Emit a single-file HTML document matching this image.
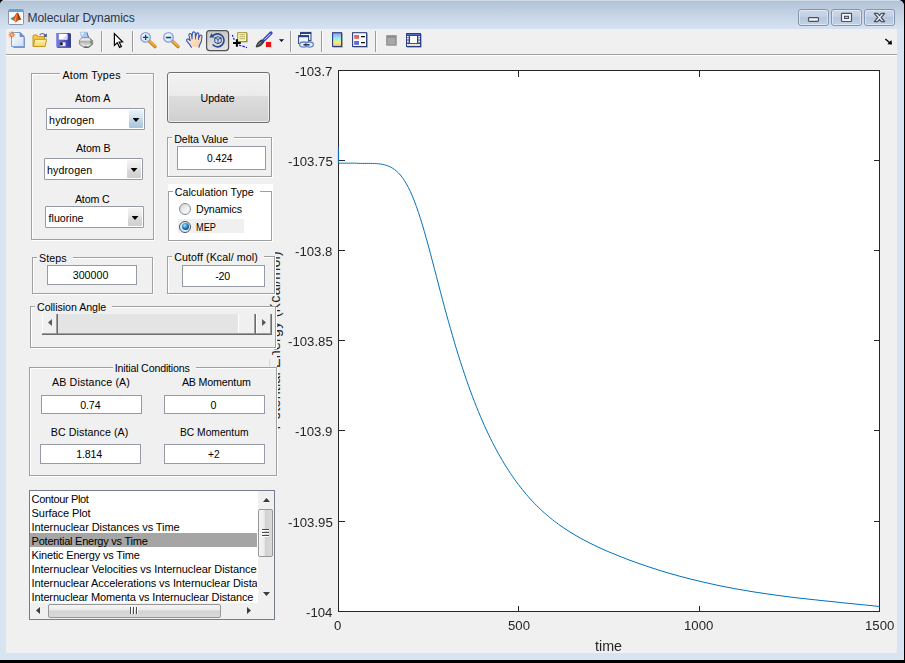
<!DOCTYPE html>
<html lang="en">
<head>
<meta charset="utf-8">
<title>Molecular Dynamics</title>
<style>
html,body{margin:0;padding:0;}
body{width:905px;height:663px;overflow:hidden;background:#000;font-family:"Liberation Sans",sans-serif;font-size:11px;color:#000;position:relative;}
#win{position:absolute;left:0;top:0;width:904px;height:660px;background:#d7e4f2;border-radius:5px 6px 0 0;overflow:hidden;}
#cap{position:absolute;left:0;top:0;width:904px;height:29px;background:linear-gradient(#dfe6ee 0px,#b3c4d8 1.5px,#bccbde 8px,#cad8e9 18px,#d5e2f1 29px);}
#cap .ttl{position:absolute;left:25.5px;top:10.4px;font-size:12px;line-height:17px;color:#2b3548;letter-spacing:-0.043px;white-space:pre;}
.cb{position:absolute;top:9px;height:17px;box-sizing:border-box;border:1px solid #8494ad;border-radius:3px;background:linear-gradient(#cbd8e9,#c1d0e4 45%,#b5c6dd 50%,#c3d2e6);box-shadow:inset 0 0 0 1px rgba(255,255,255,.45);}
#client{position:absolute;left:6px;top:29px;width:891px;height:624px;background:#f0f0f0;}
#tbline{position:absolute;left:6px;top:54px;width:891px;height:1px;background:#a0a0a0;box-shadow:0 1px 0 #fff;}
.sep{position:absolute;top:31px;width:1px;height:21px;background:#a0a0a0;}
.ico{position:absolute;overflow:visible;}
.t{position:absolute;white-space:pre;line-height:normal;font-size:11px;}
.ttl2{}
span.ttl{box-sizing:border-box;padding-left:2px;}
.pn{position:absolute;box-sizing:border-box;border:1px solid #a0a0a0;box-shadow:1px 1px 0 #fff,inset 1px 1px 0 #fff;background:#f0f0f0;}
.ed{position:absolute;box-sizing:border-box;border:1px solid #959aa4;background:#fff;}
.pop{position:absolute;box-sizing:border-box;border:1px solid #959aa4;border-radius:1px;background:#fff;height:22px;width:99px;}
.pop i{position:absolute;right:1px;top:1px;width:14px;height:18px;background:linear-gradient(#f3f3f3,#e8e8e8 42%,#dadada 58%,#cecece);border-radius:1px;}
.pop i.hot{background:linear-gradient(#e8f0f7,#d4e3ef 42%,#c0d5e6 58%,#a9c4da);}
.pop i:after{content:"";position:absolute;left:3.5px;top:8px;width:7px;height:4px;background:#000;clip-path:polygon(0 0,100% 0,50% 100%);}
#upd{position:absolute;left:167px;top:72px;width:103px;height:51px;box-sizing:border-box;border:1px solid #707070;border-radius:3px;background:linear-gradient(#f2f2f2 0,#ebebeb 46%,#dddddd 47%,#cfcfcf 100%);box-shadow:inset 0 0 0 1px rgba(255,255,255,.6);}
.rad{position:absolute;width:12px;height:12px;box-sizing:border-box;border:1px solid #868a90;border-radius:50%;background:linear-gradient(135deg,#cfcfcf 0,#ececec 45%,#ffffff 100%);}
.rad.on{border-color:#4a5664;background:#dfe9f2;}
.rad.on:after{content:"";position:absolute;left:1.5px;top:1.5px;width:7px;height:7px;border-radius:50%;background:radial-gradient(circle at 40% 35%,#a8e2fa 0,#2d8fcd 40%,#0c3f6e 78%,#10263e 100%);}
#sl{position:absolute;left:42px;top:314px;width:230px;height:21px;background:#e4e4e4;box-shadow:inset 0 -1px 0 #6c6c6c,inset 0 -2px 0 #a4a4a4;}
.tri{position:absolute;width:4px;height:7px;background:#5a5a5a;}
.sb{position:absolute;top:0;height:21px;box-sizing:border-box;background:#f0f0f0;box-shadow:inset -1px 0 0 #6c6c6c,inset 0 -1px 0 #6c6c6c,inset -2px 0 0 #9c9c9c,inset 0 -2px 0 #9c9c9c,inset 1px 0 0 #fff;}
#lb{position:absolute;left:29px;top:490px;width:246px;height:130px;box-sizing:border-box;border:1px solid #767d8a;background:#fff;overflow:hidden;}
#lb ul{position:absolute;left:0;top:0.4px;margin:0;padding:0;list-style:none;width:227px;overflow:hidden;}
#lb li{height:14px;line-height:17px;font-size:11px;white-space:pre;padding-left:1.6px;}
#lb li.sel{background:#a5a5a5;}
#vs{position:absolute;left:228px;top:0;width:17px;height:112px;background:#f0f0f0;}
#hs{position:absolute;left:0;top:112px;width:228px;height:16px;background:#f0f0f0;}
#cor{position:absolute;left:228px;top:112px;width:17px;height:16px;background:#f0f0f0;}
.thumb{position:absolute;box-sizing:border-box;border:1px solid #979797;border-radius:2px;}
.tri2{position:absolute;background:#3c3c3c;}
</style>
</head>
<body>
<div id="win">
 <div id="cap">
  <svg class="ico" style="left:8px;top:9px" width="16" height="16" viewBox="0 0 16 16">
   <rect x="0.5" y="0.5" width="15" height="15" rx="1" fill="#fafafa" stroke="#8a96a8"/>
   <rect x="1" y="1" width="14" height="2" fill="#6aa0d8"/>
   <path d="M2.2 9.8 L6.3 7.2 L8.2 10.2 L5.6 11.6 Z" fill="#3f86c7"/>
   <path d="M6.3 7.2 C7.6 5.6 8.4 3.8 9.3 3.6 C10.2 3.6 11.2 7.2 13.4 11 C12 10 11 10.6 10 11.8 C9.2 12.6 8.2 13.4 7.4 13.4 C7 12.4 6.4 11.8 5.6 11.6 Z" fill="#d9541e"/>
   <path d="M9.3 3.6 C10.2 3.6 11.2 7.2 13.4 11 C12.2 10.2 11.4 10.4 10.6 11.2 C10.4 8.4 9.8 5.6 9.3 3.6 Z" fill="#8c2a12"/>
   <path d="M7.4 13.4 C8 11.4 8.6 7.2 9.3 3.6 C8.8 5.4 7.6 8.4 6.3 10.6 Z" fill="#f2a42c"/>
  </svg>
  <span class="ttl">Molecular Dynamics</span>
  <div class="cb" style="left:798px;width:31px"><svg width="29" height="15" viewBox="0 0 29 15" style="position:absolute;left:0;top:0"><rect x="9.5" y="7.6" width="10" height="3.8" rx="0.8" fill="#f2f5f9" stroke="#4a5262" stroke-width="1.2"/></svg></div>
  <div class="cb" style="left:831px;width:31px"><svg width="29" height="15" viewBox="0 0 29 15" style="position:absolute;left:0;top:0"><rect x="9.5" y="3.3" width="10" height="8.2" rx="0.8" fill="#f2f5f9" stroke="#4a5262" stroke-width="1.2"/><rect x="12.5" y="6.3" width="4" height="2.2" fill="#c3d0e3" stroke="#4a5262" stroke-width="1.1"/></svg></div>
  <div class="cb" style="left:864px;width:31px"><svg width="29" height="15" viewBox="0 0 29 15" style="position:absolute;left:0;top:0"><path d="M9.3 3.4 h3.4 l1.8 2.2 l1.8 -2.2 h3.4 l-3.5 4.1 l3.5 4.1 h-3.4 l-1.8 -2.2 l-1.8 2.2 h-3.4 l3.5 -4.1 z" fill="#f2f5f9" stroke="#4a5262" stroke-width="1.25" stroke-linejoin="round"/></svg></div>
 </div>
 <div id="client"></div>
 <div id="tbline"></div>
 <!-- toolbar -->
 <div id="tb">
  <svg class="ico" style="left:0;top:29px" width="904" height="25" viewBox="0 29 904 25">
   <defs>
    <linearGradient id="gPage" x1="0" y1="0" x2="1" y2="1"><stop offset="0" stop-color="#ffffff"/><stop offset="1" stop-color="#c9dcf6"/></linearGradient>
    <linearGradient id="gFold" x1="0" y1="0" x2="0" y2="1"><stop offset="0" stop-color="#fff8b8"/><stop offset="1" stop-color="#f7d25c"/></linearGradient>
    <linearGradient id="gSave" x1="0" y1="0" x2="1" y2="0"><stop offset="0" stop-color="#7b80e6"/><stop offset="1" stop-color="#3636a6"/></linearGradient>
    <linearGradient id="gLens" x1="0" y1="0" x2="1" y2="1"><stop offset="0" stop-color="#ffffff"/><stop offset="1" stop-color="#b8e4f0"/></linearGradient>
    <linearGradient id="gCb" x1="0" y1="0" x2="0" y2="1"><stop offset="0" stop-color="#a48cf2"/><stop offset=".4" stop-color="#8ef0f0"/><stop offset=".72" stop-color="#f6f07e"/><stop offset="1" stop-color="#ffa890"/></linearGradient>
    <linearGradient id="gBtn" x1="0" y1="0" x2="0" y2="1"><stop offset="0" stop-color="#c6c6c6"/><stop offset="1" stop-color="#e6e6e6"/></linearGradient>
    <linearGradient id="gSkin" x1="0" y1="0" x2="1" y2="1"><stop offset="0" stop-color="#fff0dc"/><stop offset="1" stop-color="#f6c9a0"/></linearGradient>
   </defs>
   <!-- new -->
   <path d="M12.5 33.5 H20.5 L24 37 V47 H12.5 Z" fill="#6a6f9c" transform="translate(.8 .7)"/>
   <path d="M11.5 32.5 H20 L24 36.5 V46.5 H11.5 Z" fill="url(#gPage)" stroke="#7a9fe0" stroke-width="1"/>
   <path d="M20 32.5 V36.5 H24 Z" fill="#7f8fd0" stroke="#5a68a8" stroke-width=".6"/>
   <circle cx="11.8" cy="34.8" r="2.3" fill="#ec7a3c"/><circle cx="11.8" cy="34.8" r="1" fill="#f6e060"/>
   <g stroke="#e8703a" stroke-width="1"><path d="M11.8 31.4v1M11.8 37.2v1M8.4 34.8h1M14.2 34.8h1M9.3 32.3l.8 .8M13.5 36.5l.8 .8M14.3 32.3l-.8 .8M10.1 36.5l-.8 .8"/></g>
   <!-- open -->
   <path d="M33 46.5 V36 Q33 35 34 35 H37 L38.3 36.6 H44.5 V46.5 Z" fill="#f2c84c" stroke="#c6961e" stroke-width="1"/>
   <path d="M33.3 46.5 L34.8 39.3 H46.6 L45.1 46.5 Z" fill="url(#gFold)" stroke="#c6961e" stroke-width="1" stroke-linejoin="round"/>
   <path d="M39.7 35 Q42.5 32 45.3 35.2" fill="none" stroke="#4a6aa8" stroke-width="1.1"/>
   <path d="M46.9 33.6 L46.6 37.4 L43.4 36 Z" fill="#34528f"/>
   <!-- save -->
   <rect x="57" y="33.8" width="14" height="14" fill="#3b4a6b"/>
   <rect x="56.2" y="33" width="14" height="14" fill="url(#gSave)"/>
   <rect x="58.8" y="33.8" width="8.6" height="5.8" fill="#fdfdff"/>
   <path d="M62 39.6 L67.4 34.5 V39.6 Z" fill="#d5dcf2"/>
   <rect x="60.2" y="42.3" width="5.3" height="3.9" fill="#e8ecf8"/><rect x="60.2" y="42.3" width="2.4" height="3" fill="#111"/>
   <!-- print -->
   <path d="M80.2 32.2 H86.6 L88.2 38 H81.8 Z" fill="#a4c8f8" stroke="#8fa6d8" stroke-width=".5"/>
   <path d="M80.6 32.4 H84 L82.6 36 Z" fill="#e8f2ff"/>
   <path d="M86.6 32.2 L88.2 38 L89.2 38 L87.4 32.6 Z" fill="#5a5f78"/>
   <path d="M79.4 40.2 L82 37.8 H89.4 L92.6 40.6 V44.4 L88.4 47.4 H84 L79.4 44.2 Z" fill="#c9c9c9" stroke="#7a7a7a" stroke-width=".8"/>
   <path d="M79.8 40.2 L82.2 38.2 H89.2 L92 40.6 Z" fill="#e9e9e9"/>
   <path d="M89.4 38 L92.6 40.6 V44.4 L90.6 45.8 V41 Z" fill="#8c8c8c"/>
   <path d="M79.8 41.2 H90.4 V42.4 H79.8 Z" fill="#a9a9a9"/>
   <path d="M80 43 L84.4 46 H88 L90.6 44.2 L88 45 H84.6 Z" fill="#ffffff"/>
   <path d="M84 47.2 H88.6 L90.4 46 " fill="none" stroke="#4a4a4a" stroke-width=".9"/>
   <rect x="90" y="41.4" width="1.2" height="1.2" fill="#3cae3c"/>
   <rect x="85" y="45.6" width="1.6" height="1" fill="#6a78c8"/>
   <!-- separators -->
   <g fill="#9c9c9c"><rect x="101" y="31" width="1" height="21"/><rect x="132" y="31" width="1" height="21"/><rect x="290" y="31" width="1" height="21"/><rect x="321" y="31" width="1" height="21"/><rect x="375" y="31" width="1" height="21"/></g>
   <g fill="#fafafa"><rect x="102" y="31" width="1" height="21"/><rect x="133" y="31" width="1" height="21"/><rect x="291" y="31" width="1" height="21"/><rect x="322" y="31" width="1" height="21"/><rect x="376" y="31" width="1" height="21"/></g>
   <!-- pointer -->
   <path d="M114.4 33.6 V45.4 L117.2 42.8 L119.6 47.4 L121.4 46.5 L119.1 42.1 L122.6 41.8 Z" fill="#fff" stroke="#000" stroke-width="1.2" stroke-linejoin="miter"/>
   <!-- zoom in -->
   <path d="M149.6 41.6 L155 46.6" stroke="#c98420" stroke-width="3.4" stroke-linecap="round"/>
   <path d="M149.8 41.2 L155 46" stroke="#f4b44a" stroke-width="1.6" stroke-linecap="round"/>
   <circle cx="145.6" cy="37.4" r="4.8" fill="url(#gLens)" stroke="#8f9edc" stroke-width="1.3"/>
   <path d="M142.9 37.4h5.4M145.6 34.7v5.4" stroke="#26357a" stroke-width="1.3"/>
   <!-- zoom out -->
   <path d="M172.6 41.6 L178 46.6" stroke="#c98420" stroke-width="3.4" stroke-linecap="round"/>
   <path d="M172.8 41.2 L178 46" stroke="#f4b44a" stroke-width="1.6" stroke-linecap="round"/>
   <circle cx="168.5" cy="37.4" r="4.8" fill="url(#gLens)" stroke="#8f9edc" stroke-width="1.3"/>
   <path d="M165.8 37.4h5.4" stroke="#26357a" stroke-width="1.5"/>
   <!-- hand -->
   <path d="M191.5 47.5 L189.5 44.4 L186.6 40.8 Q186.4 38.8 188 38.8 L190.2 40.6 L188.9 35.2 Q189 33.4 190.4 33.5 Q191.2 33.6 191.4 34.6 L192 37.6 L192.4 33 Q193 31.7 194.2 31.9 Q195.2 32.1 195.3 33.2 L195.5 37.4 L196.5 33.6 Q197.2 32.6 198.2 33 Q199 33.4 198.9 34.6 L198.6 38.4 L199.8 35.8 Q200.6 34.8 201.4 35.2 Q202.2 35.8 202 37 L201.4 41.2 L199.8 44.8 L198.8 47.5 Z" fill="url(#gSkin)" stroke="#2b54c0" stroke-width="1.05" stroke-linejoin="round"/>
   <path d="M192 37.6 L192.1 39.4 M195.5 37.4 L195.5 39.4 M198.6 38.4 L198.4 40" stroke="#2b54c0" stroke-width=".9" fill="none"/>
   <path d="M191.8 47.5 H198.6" stroke="#f0f0f0" stroke-width="1.4"/>
   <!-- rotate 3d (pressed) -->
   <rect x="206.6" y="30.6" width="22" height="20" rx="3" fill="url(#gBtn)" stroke="#525252" stroke-width="1.2"/>
   <path d="M212.2 36.6 A6.5 6.5 0 1 1 212.6 44.6" fill="none" stroke="#2a4a8a" stroke-width="1.6"/>
   <path d="M209.4 37.6 L211.6 33.2 L214.4 37.4 Z" fill="#2a4a8a"/>
   <path d="M214.8 38 L218 36.6 L221.2 38 V42.2 L218 43.8 L214.8 42.2 Z" fill="#d6e4f6" stroke="#2a4a8a" stroke-width="1"/>
   <path d="M214.8 38 L218 39.4 L221.2 38 M218 39.4 V43.8" fill="none" stroke="#2a4a8a" stroke-width="1"/>
   <!-- data cursor -->
   <rect x="238.6" y="33.4" width="9" height="9" fill="#a0a0a0"/>
   <rect x="237.7" y="32.7" width="9" height="8.8" fill="#ffffc4" stroke="#a09030" stroke-width="1"/>
   <path d="M239.4 34.8h5.6M239.4 36.8h5.6M239.4 38.8h5.6" stroke="#a8a050" stroke-width=".9"/>
   <path d="M232.3 35 L234.6 40.6" stroke="#1010ff" stroke-width="1.2" stroke-dasharray="2 1.2"/>
   <path d="M239 45 Q243 46.4 247 47.6" stroke="#1010ff" stroke-width="1.2" stroke-dasharray="2.4 1.2" fill="none"/>
   <path d="M233 43h7.8M236.9 39.2v7.6" stroke="#000" stroke-width="2"/>
   <!-- brush -->
   <path d="M263.4 40.6 L271 33" stroke="#3a48bc" stroke-width="3.2" stroke-linecap="round"/>
   <path d="M264.6 39.6 L270.4 33.8" stroke="#e8ecff" stroke-width="1"/>
   <path d="M256 47 Q257 42 261.4 39.8 L263.6 42 Q262 46.6 256 47 Z" fill="#4a4a4a" stroke="#2a2a2a" stroke-width=".8"/>
   <path d="M258.2 44.6 L261 42" stroke="#9a9a9a" stroke-width="1"/>
   <rect x="265.6" y="41.7" width="5.9" height="5.6" fill="#ee1212" stroke="#fff" stroke-width=".6"/>
   <path d="M278.9 39.2 H284.1 L281.5 42.1 Z" fill="#111"/>
   <!-- link -->
   <rect x="300.6" y="32.4" width="10.4" height="8" fill="#f4f8ff" stroke="#2a3f80" stroke-width="1"/><rect x="300.6" y="32.2" width="10.4" height="1.8" fill="#2a3f80"/>
   <rect x="298.6" y="35.6" width="10" height="8" fill="#eef4fc" stroke="#2a3f80" stroke-width="1"/><rect x="298.6" y="35.4" width="10" height="1.8" fill="#2a3f80"/>
   <ellipse cx="303.6" cy="44.6" rx="4" ry="2.6" fill="#e8f0fa" stroke="#6a88c0" stroke-width="1.3"/>
   <ellipse cx="309.4" cy="44.6" rx="4" ry="2.6" fill="#e8f0fa" stroke="#6a88c0" stroke-width="1.3"/>
   <path d="M303.4 44.8 H309.6" stroke="#26314f" stroke-width="1.5"/>
   <!-- colorbar -->
   <rect x="333.4" y="33.4" width="9.4" height="14.2" fill="#a8a8a8"/>
   <rect x="332.6" y="32.7" width="9" height="13.8" fill="url(#gCb)" stroke="#2b3f7a" stroke-width="1.1"/>
   <!-- legend -->
   <rect x="353.4" y="33.4" width="14.4" height="14.2" fill="#a8a8a8"/>
   <rect x="352.6" y="32.7" width="14" height="13.8" fill="#fafcff" stroke="#2b3f7a" stroke-width="1.1"/>
   <rect x="354.2" y="35" width="4.8" height="3.8" fill="#e06262"/><rect x="354.2" y="41" width="4.8" height="3.8" fill="#6464e2"/>
   <path d="M361 36.6h4M361 42.6h4" stroke="#111" stroke-width="1.4"/>
   <!-- gray square -->
   <rect x="386.2" y="35.2" width="10.5" height="10.5" fill="#8c8c8c"/><rect x="387.4" y="37.8" width="8" height="6.8" fill="#a8a8a8"/>
   <!-- film -->
   <rect x="407" y="34" width="14.6" height="13.6" fill="#8a8a80"/>
   <rect x="406" y="33" width="15" height="14" fill="#2b4080"/>
   <rect x="406.8" y="34" width="13.4" height="1.2" fill="#4a6ad0"/>
   <rect x="410" y="36" width="7" height="7" fill="#fff"/>
   <path d="M407.9 36 V43 M419.1 36 V43" stroke="#f8f8f8" stroke-width="1.7" stroke-dasharray="1.2 .5"/>
   <rect x="407" y="44" width="13" height="2" fill="#e6dfc8"/>
   <path d="M407 44.3 H420" stroke="#fbfaf2" stroke-width=".8" stroke-dasharray="1 .6"/>
   <!-- corner arrow -->
   <path d="M885.4 39 L890.6 43.6" stroke="#000" stroke-width="1.4"/><path d="M892 44.6 L887.4 44.2 L891.4 40 Z" fill="#000"/>
  </svg>

 </div>

 <!-- axes -->
 <svg class="ico" style="left:0;top:0" width="904" height="660" viewBox="0 0 904 660">
  <g font-family="Liberation Sans, sans-serif" fill="#262626">
   <text transform="translate(280.4 340.3) rotate(-90)" text-anchor="middle" font-size="14.3" letter-spacing="0.191">Potential Energy (Kcal/mol)</text>
  </g>
  <rect x="338.5" y="70.5" width="541" height="541" fill="#fff" stroke="#262626" stroke-width="1" shape-rendering="crispEdges"/>
  <g stroke="#262626" stroke-width="1" shape-rendering="crispEdges">
   <path d="M518.5 611v-5.5M699.5 611v-5.5M518.5 71v5.5M699.5 71v5.5"/>
   <path d="M339 160.5h5.5M339 250.5h5.5M339 340.5h5.5M339 430.5h5.5M339 521.5h5.5"/>
   <path d="M879 160.5h-5.5M879 250.5h-5.5M879 340.5h-5.5M879 430.5h-5.5M879 521.5h-5.5"/>
  </g>
  <polyline points="338.4,147 338.4,163.2 340.4,163.2 342.4,163.2 344.4,163.2 346.4,163.2 348.4,163.2 350.4,163.2 352.4,163.2 354.4,163.2 356.4,163.2 358.4,163.4 360.4,163.4 362.4,163.4 364.4,163.4 366.4,163.4 368.4,163.4 370.4,163.4 372.4,163.4 374.4,163.5 376.4,163.6 378.4,163.8 380.4,164.0 382.4,164.3 384.4,164.8 386.4,165.4 388.4,166.1 390.4,167.0 392.4,168.1 394.4,169.4 396.4,171.0 398.4,172.9 400.4,175.0 402.4,177.6 404.4,180.5 406.4,183.8 408.4,187.5 410.4,191.6 412.4,196.1 414.4,201.1 416.4,206.5 418.4,212.3 420.4,218.4 422.4,224.9 424.4,231.7 426.4,238.8 428.4,246.0 430.4,253.5 432.4,261.1 434.4,268.7 436.4,276.4 438.4,284.0 440.4,291.7 442.4,299.3 444.4,306.7 446.4,314.1 448.4,321.3 450.4,328.4 452.4,335.4 454.4,342.2 456.4,348.8 458.4,355.3 460.4,361.6 462.4,367.8 464.4,373.8 466.4,379.7 468.4,385.4 470.4,390.9 472.4,396.3 474.4,401.5 476.4,406.6 478.4,411.5 480.4,416.3 482.4,421.0 484.4,425.5 486.4,429.9 488.4,434.1 490.4,438.3 492.4,442.3 494.4,446.1 496.4,449.9 498.4,453.6 500.4,457.1 502.4,460.5 504.4,463.9 506.4,467.1 508.4,470.2 510.4,473.3 512.4,476.2 514.4,479.1 516.4,481.8 518.4,484.5 520.4,487.1 522.4,489.6 524.4,492.1 526.4,494.5 528.4,496.8 530.4,499.0 532.4,501.2 534.4,503.3 536.4,505.3 538.4,507.3 540.4,509.2 542.4,511.1 544.4,512.9 546.4,514.6 548.4,516.3 550.4,518.0 552.4,519.6 554.4,521.2 556.4,522.7 558.4,524.2 560.0,525.3 565.0,528.8 570.0,532.0 575.0,535.0 580.0,537.9 585.0,540.6 590.0,543.2 595.0,545.6 600.0,548.0 605.0,550.2 610.0,552.4 615.0,554.4 620.0,556.4 625.0,558.4 630.0,560.3 635.0,562.1 640.0,563.9 645.0,565.6 650.0,567.3 655.0,568.9 660.0,570.5 665.0,572.0 670.0,573.5 675.0,574.9 680.0,576.3 685.0,577.6 690.0,578.9 695.0,580.1 700.0,581.3 705.0,582.5 710.0,583.6 715.0,584.7 720.0,585.8 725.0,586.8 730.0,587.7 735.0,588.7 740.0,589.6 745.0,590.4 750.0,591.3 755.0,592.1 760.0,592.8 765.0,593.6 770.0,594.3 775.0,595.0 780.0,595.7 785.0,596.3 790.0,597.0 795.0,597.6 800.0,598.2 805.0,598.7 810.0,599.3 815.0,599.8 820.0,600.4 825.0,600.9 830.0,601.4 835.0,601.9 840.0,602.5 845.0,603.0 850.0,603.5 855.0,604.0 860.0,604.5 865.0,605.0 870.0,605.5 875.0,606.0 879.5,606.5" fill="none" stroke="#0072bd" stroke-width="1" stroke-linejoin="round"/>
 </svg>
<span class="t" style="left:294.8px;top:63.85px;font-size:13.2px;color:#262626;will-change:transform;">-103.7</span>
<span class="t" style="left:287.5px;top:153.95px;font-size:13.2px;color:#262626;will-change:transform;">-103.75</span>
<span class="t" style="left:294.8px;top:244.15px;font-size:13.2px;color:#262626;will-change:transform;">-103.8</span>
<span class="t" style="left:287.5px;top:334.25px;font-size:13.2px;color:#262626;will-change:transform;">-103.85</span>
<span class="t" style="left:294.8px;top:424.35px;font-size:13.2px;color:#262626;will-change:transform;">-103.9</span>
<span class="t" style="left:287.5px;top:514.55px;font-size:13.2px;color:#262626;will-change:transform;">-103.95</span>
<span class="t" style="left:305.8px;top:604.65px;font-size:13.2px;color:#262626;will-change:transform;">-104</span>
<span class="t" style="left:334.3px;top:617.95px;font-size:13.2px;color:#262626;will-change:transform;">0</span>
<span class="t" style="left:507.5px;top:617.95px;font-size:13.2px;color:#262626;will-change:transform;">500</span>
<span class="t" style="left:684.4px;top:617.95px;font-size:13.2px;color:#262626;will-change:transform;">1000</span>
<span class="t" style="left:864.9px;top:617.95px;font-size:13.2px;color:#262626;will-change:transform;">1500</span>
 <span class="t" style="left:595.14px;top:637.56px;font-size:14.3px;color:#262626;will-change:transform">time</span>

 <!-- cover strip where the y-label is hidden between panels -->
 <div style="position:absolute;left:270.4px;top:354.5px;width:7.1px;height:13px;background:#f0f0f0"></div>
 <div style="position:absolute;left:264px;top:246px;width:11px;height:11px;background:#f0f0f0"></div>

 <!-- panels -->
 <div class="pn" style="left:31px;top:73px;width:123px;height:167px"></div>
 <div class="pn" style="left:167px;top:137px;width:105px;height:40px"></div>
 <div style="position:absolute;left:168px;top:184px;width:105px;height:58px;background:#fff"></div>
 <div class="pn" style="left:168px;top:191px;width:104px;height:50px;background:#fff;box-shadow:none"></div>
 <div class="pn" style="left:32px;top:257px;width:121px;height:37px"></div>
 <div class="pn" style="left:167px;top:256px;width:108px;height:38px"></div>
 <div class="pn" style="left:30px;top:306px;width:246px;height:42px"></div>
 <div class="pn" style="left:29px;top:367px;width:248px;height:109px"></div>
<span class="t ttl" style="left:60.4px;top:68.94px;width:66.1px;font-size:10.67px;background:#f0f0f0;letter-spacing:0.225px">Atom Types</span>
<span class="t ttl" style="left:172.2px;top:132.94px;width:61.9px;font-size:10.67px;background:#f0f0f0;letter-spacing:-0.041px">Delta Value</span>
<span class="t ttl" style="left:172.8px;top:186.24px;width:86.8px;font-size:10.67px;background:#fff;letter-spacing:0.014px">Calculation Type</span>
<span class="t ttl" style="left:37.0px;top:251.94px;width:35.6px;font-size:10.67px;background:#f0f0f0;letter-spacing:0.088px">Steps</span>
<span class="t ttl" style="left:172.2px;top:251.44px;width:91.6px;font-size:10.67px;background:#f0f0f0;letter-spacing:0.087px">Cutoff (Kcal/ mol)</span>
<span class="t ttl" style="left:35.0px;top:300.84px;width:77.2px;font-size:10.67px;background:#f0f0f0;letter-spacing:-0.05px">Collision Angle</span>
<span class="t ttl" style="left:112.7px;top:362.24px;width:83.2px;font-size:10.67px;background:#f0f0f0;letter-spacing:-0.177px">Initial Conditions</span>

 <!-- popups -->
 <div class="pop" style="left:46px;top:108px"><i class="hot"></i></div>
 <div class="pop" style="left:44px;top:158px"><i></i></div>
 <div class="pop" style="left:45px;top:206px"><i></i></div>

 <div id="upd"></div>

 <!-- edits -->
 <div class="ed" style="left:177px;top:146px;width:89px;height:24px"></div>
 <div class="ed" style="left:47px;top:265px;width:90px;height:20px"></div>
 <div class="ed" style="left:182px;top:265px;width:83px;height:22px"></div>
 <div class="ed" style="left:41px;top:395px;width:101px;height:19px"></div>
 <div class="ed" style="left:164px;top:395px;width:101px;height:19px"></div>
 <div class="ed" style="left:40px;top:444px;width:101px;height:20px"></div>
 <div class="ed" style="left:164px;top:444px;width:101px;height:20px"></div>

 <!-- radios -->
 <div style="position:absolute;left:178px;top:219px;width:66px;height:14px;background:#f0f0f0"></div>
 <div class="rad" style="left:179px;top:203px"></div>
 <div class="rad on" style="left:179px;top:220.5px"></div>

 <!-- slider -->
 <div id="sl">
  <div class="sb" style="left:0;width:16px"><span class="tri" style="left:6px;top:5px;clip-path:polygon(100% 0,100% 100%,0 50%)"></span></div>
  <div class="sb" style="left:196px;width:18px"></div>
  <div class="sb" style="left:214px;width:16px"><span class="tri" style="left:6px;top:5px;clip-path:polygon(0 0,0 100%,100% 50%)"></span></div>
 </div>

 <!-- listbox -->
 <div id="lb">
  <ul>
<li style="letter-spacing:-0.351px">Contour Plot</li>
<li style="letter-spacing:-0.08px">Surface Plot</li>
<li style="letter-spacing:-0.08px">Internuclear Distances vs Time</li>
<li class="sel" style="letter-spacing:-0.238px">Potential Energy vs Time</li>
<li style="letter-spacing:-0.175px">Kinetic Energy vs Time</li>
<li style="letter-spacing:-0.08px">Internuclear Velocities vs Internuclear Distances</li>
<li style="letter-spacing:-0.08px">Internuclear Accelerations vs Internuclear Distances</li>
<li style="letter-spacing:-0.142px">Internuclear Momenta vs Internuclear Distance</li>
  </ul>
  <div id="vs">
   <span class="tri2" style="left:5px;top:7px;width:7px;height:4px;clip-path:polygon(50% 0,100% 100%,0 100%)"></span>
   <div class="thumb" style="left:0;top:18px;width:14.5px;height:47.5px;background:linear-gradient(90deg,#f5f5f5,#ececec 40%,#d2d2d2 50%,#dadada 100%)"></div>
   <div style="position:absolute;left:4px;top:38px;width:7px;height:1px;background:#4a4a4a;box-shadow:0 1px 0 #fff,0 3px 0 #4a4a4a,0 4px 0 #fff,0 6px 0 #4a4a4a,0 7px 0 #fff"></div>
   <span class="tri2" style="left:5px;top:101px;width:7px;height:4px;clip-path:polygon(0 0,100% 0,50% 100%)"></span>
  </div>
  <div id="hs">
   <span class="tri2" style="left:6px;top:4px;width:4px;height:7px;clip-path:polygon(100% 0,100% 100%,0 50%)"></span>
   <div class="thumb" style="left:18px;top:0.5px;width:172.5px;height:14.5px;background:linear-gradient(#f5f5f5,#ececec 40%,#d2d2d2 50%,#dadada 100%)"></div>
   <div style="position:absolute;left:100px;top:4px;width:1px;height:7px;background:#4a4a4a;box-shadow:1px 0 0 #fff,3px 0 0 #4a4a4a,4px 0 0 #fff,6px 0 0 #4a4a4a,7px 0 0 #fff"></div>
   <span class="tri2" style="left:217px;top:4px;width:4px;height:7px;clip-path:polygon(0 0,0 100%,100% 50%)"></span>
  </div>
  <div id="cor"></div>
 </div>

<span class="t" style="left:74.9px;top:91.84px;font-size:10.67px;letter-spacing:0.228px;">Atom A</span>
<span class="t" style="left:49.1px;top:114.24px;font-size:10.67px;letter-spacing:0.109px;">hydrogen</span>
<span class="t" style="left:76.0px;top:142.34px;font-size:10.67px;letter-spacing:-0.091px;">Atom B</span>
<span class="t" style="left:47.0px;top:164.34px;font-size:10.67px;letter-spacing:0.095px;">hydrogen</span>
<span class="t" style="left:74.9px;top:193.34px;font-size:10.67px;letter-spacing:-0.166px;">Atom C</span>
<span class="t" style="left:48.6px;top:212.14px;font-size:10.67px;letter-spacing:-0.008px;">fluorine</span>
<span class="t" style="left:200.6px;top:92.14px;font-size:10.67px;letter-spacing:-0.075px;">Update</span>
<span class="t" style="left:207.4px;top:151.84px;font-size:10.67px;transform:scaleX(0.956);transform-origin:0 0;">0.424</span>
<span class="t" style="left:196.1px;top:203.04px;font-size:10.67px;letter-spacing:-0.126px;">Dynamics</span>
<span class="t" style="left:196.1px;top:220.94px;font-size:10.67px;transform:scaleX(0.862);transform-origin:0 0;">MEP</span>
<span class="t" style="left:72.7px;top:268.54px;font-size:10.67px;letter-spacing:0.028px;">300000</span>
<span class="t" style="left:215.2px;top:270.14px;font-size:10.67px;letter-spacing:-0.253px;">-20</span>
<span class="t" style="left:52.0px;top:376.04px;font-size:10.67px;letter-spacing:0.149px;">AB Distance (A)</span>
<span class="t" style="left:80.2px;top:399.24px;font-size:10.67px;letter-spacing:-0.117px;">0.74</span>
<span class="t" style="left:181.9px;top:376.04px;font-size:10.67px;letter-spacing:-0.158px;">AB Momentum</span>
<span class="t" style="left:210.4px;top:399.24px;font-size:10.67px;">0</span>
<span class="t" style="left:50.8px;top:426.14px;font-size:10.67px;letter-spacing:0.079px;">BC Distance (A)</span>
<span class="t" style="left:76.3px;top:448.24px;font-size:10.67px;letter-spacing:-0.218px;">1.814</span>
<span class="t" style="left:179.9px;top:426.14px;font-size:10.67px;transform:scaleX(0.963);transform-origin:0 0;">BC Momentum</span>
<span class="t" style="left:208.0px;top:448.24px;font-size:10.67px;transform:scaleX(0.954);transform-origin:0 0;">+2</span>
</div>
</body>
</html>
